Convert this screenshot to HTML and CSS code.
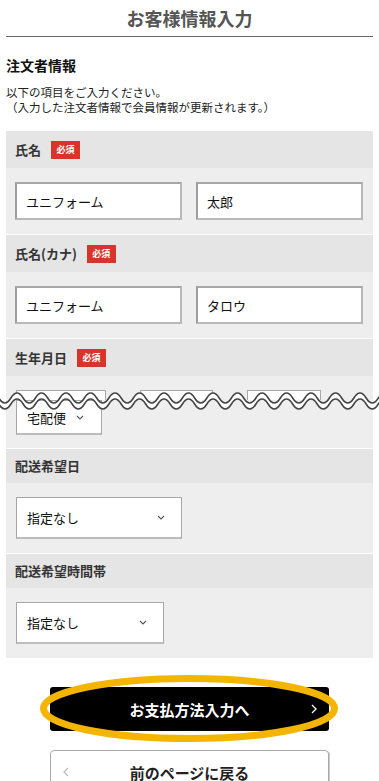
FILE: index.html
```html
<!DOCTYPE html>
<html lang="ja">
<head>
<meta charset="utf-8">
<title>お客様情報入力</title>
<link rel="stylesheet" href="styles.css">
</head>
<body>
<div class="page">
  <h1 class="title">お客様情報入力</h1>
  <h2 class="sec">注文者情報</h2>
  <p class="lead">以下の項目をご入力ください。<br>（入力した注文者情報で会員情報が更新されます。）</p>

  <div class="form">
    <div class="field">
      <div class="field-head req"><span class="label">氏名</span><span class="badge">必須</span></div>
      <div class="field-body">
        <div class="name-row">
          <input class="input" type="text" value="ユニフォーム">
          <input class="input" type="text" value="太郎">
        </div>
      </div>
    </div>
    <div class="field">
      <div class="field-head req"><span class="label">氏名(カナ)</span><span class="badge">必須</span></div>
      <div class="field-body">
        <div class="name-row">
          <input class="input" type="text" value="ユニフォーム">
          <input class="input" type="text" value="タロウ">
        </div>
      </div>
    </div>
    <div class="field">
      <div class="field-head req"><span class="label">生年月日</span><span class="badge">必須</span></div>
      <div class="field-body cut-body">
        <div class="cut-row">
          <div class="cut-box cut-a"></div>
          <div class="cut-box cut-b"></div>
          <div class="cut-box cut-c"></div>
        </div>
        <div class="select ship">
          <span>宅配便</span>
          <svg class="chev" width="8" height="5" viewBox="0 0 8 5"><path d="M1 1L4 4L7 1" fill="none" stroke="#555" stroke-width="1.1"/></svg>
        </div>
        <svg class="wave" width="379" height="24" viewBox="0 0 379 24">
          <path d="M-13.6 8q6.125-10 12.25 0t12.25 0t12.25 0t12.25 0t12.25 0t12.25 0t12.25 0t12.25 0t12.25 0t12.25 0t12.25 0t12.25 0t12.25 0t12.25 0t12.25 0t12.25 0t12.25 0t12.25 0t12.25 0t12.25 0t12.25 0t12.25 0t12.25 0t12.25 0t12.25 0t12.25 0t12.25 0t12.25 0t12.25 0t12.25 0t12.25 0t12.25 0t12.25 0t12.25 0L402.9 14q-6.125 10-12.25 0t-12.25 0t-12.25 0t-12.25 0t-12.25 0t-12.25 0t-12.25 0t-12.25 0t-12.25 0t-12.25 0t-12.25 0t-12.25 0t-12.25 0t-12.25 0t-12.25 0t-12.25 0t-12.25 0t-12.25 0t-12.25 0t-12.25 0t-12.25 0t-12.25 0t-12.25 0t-12.25 0t-12.25 0t-12.25 0t-12.25 0t-12.25 0t-12.25 0t-12.25 0t-12.25 0t-12.25 0t-12.25 0t-12.25 0Z" fill="#fff"/>
          <path d="M-13.6 8q6.125-10 12.25 0t12.25 0t12.25 0t12.25 0t12.25 0t12.25 0t12.25 0t12.25 0t12.25 0t12.25 0t12.25 0t12.25 0t12.25 0t12.25 0t12.25 0t12.25 0t12.25 0t12.25 0t12.25 0t12.25 0t12.25 0t12.25 0t12.25 0t12.25 0t12.25 0t12.25 0t12.25 0t12.25 0t12.25 0t12.25 0t12.25 0t12.25 0t12.25 0t12.25 0" fill="none" stroke="#444" stroke-width="1.6"/>
          <path d="M-13.6 14q6.125-10 12.25 0t12.25 0t12.25 0t12.25 0t12.25 0t12.25 0t12.25 0t12.25 0t12.25 0t12.25 0t12.25 0t12.25 0t12.25 0t12.25 0t12.25 0t12.25 0t12.25 0t12.25 0t12.25 0t12.25 0t12.25 0t12.25 0t12.25 0t12.25 0t12.25 0t12.25 0t12.25 0t12.25 0t12.25 0t12.25 0t12.25 0t12.25 0t12.25 0t12.25 0" fill="none" stroke="#444" stroke-width="1.6"/>
        </svg>
      </div>
    </div>
    <div class="field">
      <div class="field-head"><span class="label">配送希望日</span></div>
      <div class="field-body">
        <div class="select date">
          <span>指定なし</span>
          <svg class="chev" width="8" height="5" viewBox="0 0 8 5"><path d="M1 1L4 4L7 1" fill="none" stroke="#555" stroke-width="1.1"/></svg>
        </div>
      </div>
    </div>
    <div class="field">
      <div class="field-head"><span class="label">配送希望時間帯</span></div>
      <div class="field-body">
        <div class="select time">
          <span>指定なし</span>
          <svg class="chev" width="8" height="5" viewBox="0 0 8 5"><path d="M1 1L4 4L7 1" fill="none" stroke="#555" stroke-width="1.1"/></svg>
        </div>
      </div>
    </div>
  </div>

  <div class="actions">
    <div class="btn-wrap">
      <button class="btn btn-primary" type="button">
        <span class="btn-side"></span>
        <span class="btn-text">お支払方法入力へ</span>
        <span class="btn-side"><svg width="6" height="10" viewBox="0 0 6 10"><path d="M1 1L5 5L1 9" fill="none" stroke="#fff" stroke-width="1.3"/></svg></span>
      </button>
      <svg class="ring" width="306" height="75" viewBox="0 0 306 75"><ellipse cx="153" cy="37.5" rx="145.5" ry="30" fill="none" stroke="#f4b500" stroke-width="7"/></svg>
    </div>
    <button class="btn btn-back" type="button">
      <span class="btn-side"><svg width="6" height="10" viewBox="0 0 6 10"><path d="M5 1L1 5L5 9" fill="none" stroke="#bbb" stroke-width="1.3"/></svg></span>
      <span class="btn-text">前のページに戻る</span>
      <span class="btn-side"></span>
    </button>
  </div>
</div>
</body>
</html>
```
FILE: styles.css
```css
* { box-sizing: border-box; }

body {
  margin: 0;
  font-family: "Noto Sans CJK JP", "Noto Sans", sans-serif;
  color: #222;
  background: #fff;
}

.page {
  padding: 0 6px;
}

.title {
  margin: 0;
  font-size: 18px;
  line-height: 36px;
  font-weight: bold;
  color: #555;
  text-align: center;
  border-bottom: 1px solid #666;
}

.sec {
  margin: 18px 0 0;
  font-size: 14px;
  line-height: 20px;
  font-weight: bold;
  color: #111;
}

.lead {
  margin: 10px 0 0;
  font-size: 11.5px;
  line-height: 15px;
  color: #222;
}

.form {
  margin-top: 16px;
}

.field + .field {
  border-top: 1px solid #fff;
}

.field-head {
  display: flex;
  align-items: center;
  gap: 10px;
  height: 34px;
  padding: 0 9px;
  background: #e5e5e5;
}

.field-head.req {
  height: 37px;
}

.label {
  font-size: 13px;
  line-height: 16px;
  font-weight: bold;
  color: #333;
}

.badge {
  display: flex;
  align-items: center;
  justify-content: center;
  width: 29px;
  height: 18px;
  background: #d8352a;
  color: #fff;
  font-size: 9px;
  font-weight: bold;
  line-height: 1;
}

.field-body {
  background: #eee;
  padding: 14px 10px 14px 9px;
}

.name-row {
  display: grid;
  grid-template-columns: 1fr 1fr;
  gap: 14px;
}

.input {
  display: block;
  width: 100%;
  height: 38px;
  margin: 0;
  padding: 0 9px;
  border: 2px solid #b8b8b8;
  border-top-color: #a6a6a6;
  border-left-color: #9e9e9e;
  border-radius: 0;
  background: #fff;
  font-family: inherit;
  font-size: 13px;
  color: #111;
  outline: none;
}

.cut-body {
  position: relative;
  padding-bottom: 13px;
}

.cut-row {
  display: flex;
  gap: 34px;
  margin-left: 1px;
}

.cut-box {
  height: 10px;
  background: #fff;
  border: 1px solid #a8a8a8;
  border-bottom: none;
}

.cut-a { width: 90px; }
.cut-b { width: 73px; }
.cut-c { width: 74px; }

.select {
  display: flex;
  align-items: center;
  justify-content: space-between;
  margin-left: 1px;
  height: 42px;
  padding: 0 16px 0 10px;
  background: #fff;
  border: 1px solid #a6a6a6;
  border-bottom: 2px solid #bcbcbc;
  font-size: 13px;
  color: #111;
}

.select.ship {
  width: 86px;
  height: 35px;
  padding-right: 17px;
}

.select.date { width: 166px; }
.select.time { width: 148px; }

.chev { display: block; }

.wave {
  position: absolute;
  left: -6px;
  top: 14px;
  display: block;
  overflow: visible;
}

.actions {
  display: flex;
  flex-direction: column;
  align-items: center;
  gap: 19px;
  margin-top: 29px;
}

.btn-wrap {
  position: relative;
  width: 279px;
}

.btn {
  display: grid;
  grid-template-columns: 30px 1fr 30px;
  align-items: center;
  width: 279px;
  height: 44px;
  margin: 0;
  padding: 0;
  font-family: inherit;
  font-size: 15px;
  font-weight: bold;
  line-height: 1;
  cursor: pointer;
}

.btn-side {
  display: flex;
  justify-content: center;
  align-items: center;
}

.btn-text {
  text-align: center;
}

.btn-primary {
  background: #000;
  color: #fff;
  border: none;
  border-radius: 3px;
}

.btn-back {
  background: #fff;
  color: #222;
  border: 1px solid #a9a9a9;
  border-radius: 4px;
  box-shadow: 1px 1px 0 #cfcfcf;
}

.ring {
  position: absolute;
  left: -14px;
  top: -16px;
  pointer-events: none;
}
```
